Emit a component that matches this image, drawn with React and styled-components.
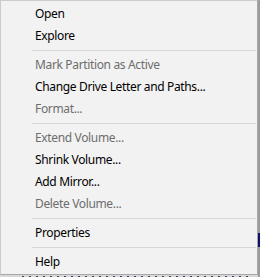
import React from 'react';
import styled, { createGlobalStyle } from 'styled-components';

const GlobalStyle = createGlobalStyle`
  html, body {
    margin: 0;
    padding: 0;
  }
  body {
    width: 260px;
    height: 277px;
    overflow: hidden;
    background: #f0f0f0;
  }
`;

const Desktop = styled.div`
  position: relative;
  width: 260px;
  height: 277px;
  display: grid;
  grid-template-columns: 258px 2px;
  grid-template-rows: 275px 2px;
  background: #f0f0f0;
`;

const BehindRight = styled.div`
  grid-column: 2;
  grid-row: 1 / span 2;
  display: flex;
  flex-direction: column;
  background: #9c9c9c;
`;

const NavyBlock = styled.div`
  margin-top: 233px;
  height: 14px;
  background: #0a1464;
`;

const BehindBottom = styled.div`
  grid-column: 1;
  grid-row: 2;
  background:
    repeating-linear-gradient(90deg, #3a3a5a 0 2px, transparent 2px 7px) 22px 1px / 230px 1px no-repeat,
    #d8d8d8;
`;

const Menu = styled.ul`
  position: absolute;
  top: 0;
  left: 0;
  box-sizing: border-box;
  width: 258px;
  height: 275px;
  margin: 0;
  padding: 2px 1px 1px 2px;
  list-style: none;
  background: #f2f2f2;
  border: 1px solid #cccccc;
  border-right-color: #a8a8a8;
  border-bottom-color: #a8a8a8;
  font-family: "Segoe UI", "Noto Sans", "Open Sans", sans-serif;
  font-size: 12px;
  letter-spacing: -0.35px;
`;

const Item = styled.li`
  height: 22px;
  line-height: 22px;
  padding-left: 32px;
  white-space: nowrap;
  color: ${(p) => (p.$disabled ? '#6d6d6d' : '#000000')};
  cursor: default;
`;

const Separator = styled.li`
  height: 7px;
  display: flex;
  align-items: center;
  padding-left: 29px;

  &::after {
    content: '';
    flex: 1;
    height: 1px;
    background: #d7d7d7;
  }
`;

const items = [
  { label: 'Open' },
  { label: 'Explore' },
  { sep: true },
  { label: 'Mark Partition as Active', disabled: true },
  { label: 'Change Drive Letter and Paths...' },
  { label: 'Format...', disabled: true },
  { sep: true },
  { label: 'Extend Volume...', disabled: true },
  { label: 'Shrink Volume...' },
  { label: 'Add Mirror...' },
  { label: 'Delete Volume...', disabled: true },
  { sep: true },
  { label: 'Properties' },
  { sep: true },
  { label: 'Help' },
];

export default function App() {
  return (
    <>
      <GlobalStyle />
      <Desktop>
        <BehindRight>
          <NavyBlock />
        </BehindRight>
        <BehindBottom />
        <Menu>
          {items.map((it, i) =>
            it.sep ? (
              <Separator key={i} />
            ) : (
              <Item key={i} $disabled={it.disabled}>
                {it.label}
              </Item>
            )
          )}
        </Menu>
      </Desktop>
    </>
  );
}
